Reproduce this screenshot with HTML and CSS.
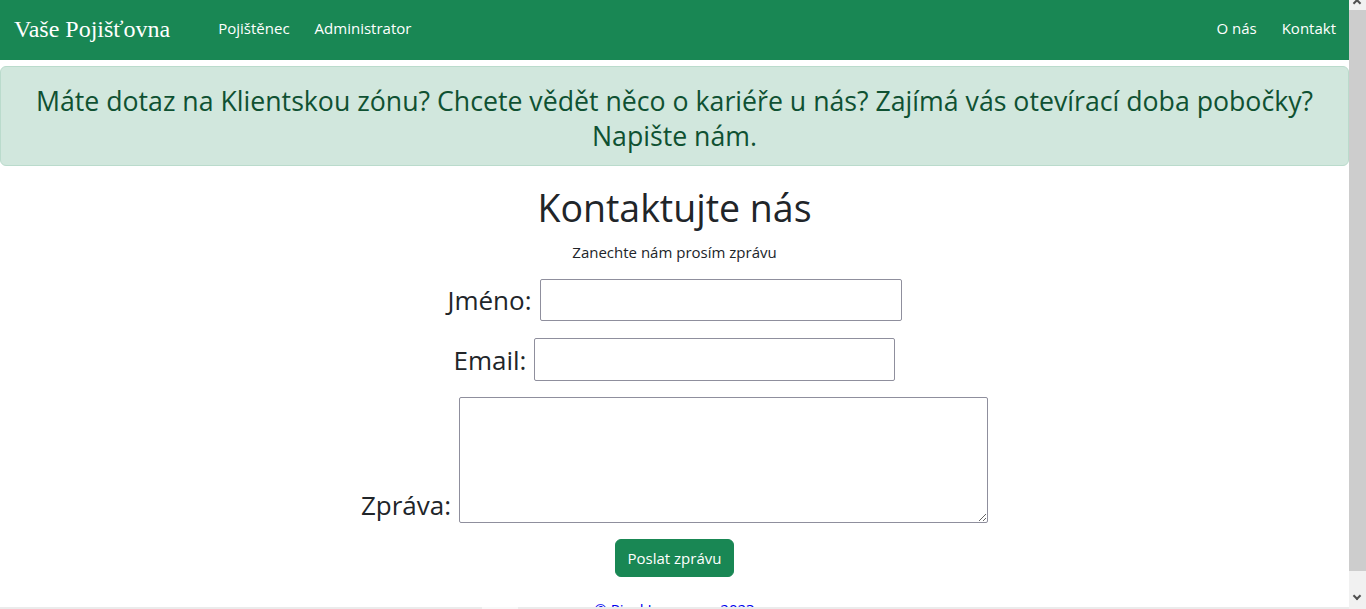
FILE: index.html
```html
<!DOCTYPE html>
<html lang="cs">
<head>
<meta charset="utf-8">
<title>Kontakt - Vaše Pojišťovna</title>
<link rel="stylesheet" href="styles.css">
</head>
<body>
<div class="page">
  <nav class="navbar">
    <a class="brand" href="#">Vaše Pojišťovna</a>
    <ul class="nav-left">
      <li><a href="#">Pojištěnec</a></li>
      <li><a href="#">Administrator</a></li>
    </ul>
    <ul class="nav-right">
      <li><a href="#">O nás</a></li>
      <li><a href="#">Kontakt</a></li>
    </ul>
  </nav>

  <div class="alert">
    <p>Máte dotaz na Klientskou zónu? Chcete vědět něco o kariéře u nás? Zajímá vás otevírací doba pobočky? Napište nám.</p>
  </div>

  <main class="contact">
    <h1 class="title">Kontaktujte nás</h1>
    <p class="subtitle">Zanechte nám prosím zprávu</p>
    <form class="form">
      <div class="row">
        <label class="label" for="jmeno">Jméno:</label>
        <input class="field field-name" id="jmeno" type="text">
      </div>
      <div class="row">
        <label class="label" for="email">Email:</label>
        <input class="field field-email" id="email" type="email">
      </div>
      <div class="row row-end">
        <label class="label label-msg" for="zprava">Zpráva:</label>
        <textarea class="field field-msg" id="zprava"></textarea>
      </div>
      <button class="btn" type="button">Poslat zprávu</button>
    </form>
    <footer class="footer"><a href="#">© Pixel Insurance 2023</a></footer>
  </main>
</div>

<div class="vscroll">
  <div class="vs-top"><span class="caret up"></span></div>
  <div class="vs-thumb"></div>
  <div class="vs-bottom"><span class="caret down"></span></div>
</div>
<div class="hscroll"><div class="hs-thumb"></div></div>
</body>
</html>
```

FILE: styles.css
```css
* { box-sizing: border-box; }

html, body {
  margin: 0;
  padding: 0;
  height: 100%;
  overflow: hidden;
  background: #fff;
}

body {
  font-family: "Open Sans", "Noto Sans", sans-serif;
  color: #212529;
}

.page {
  width: calc(100% - 17px);
  height: 100%;
  overflow: hidden;
}

/* Navbar */
.navbar {
  height: 60px;
  background: #198754;
  display: flex;
  align-items: center;
  padding: 0 13px 0 14px;
}

.brand {
  font-family: "Liberation Serif", "Times New Roman", serif;
  font-size: 24px;
  color: #fff;
  text-decoration: none;
  margin-right: 48px;
  margin-top: -2px;
}

.nav-left, .nav-right {
  list-style: none;
  margin: 0;
  padding: 0;
  display: flex;
  gap: 25px;
}

.nav-left li, .nav-right li {
  margin-top: -4px;
}

.nav-right { margin-left: auto; }

.navbar li a {
  color: #fff;
  text-decoration: none;
  font-size: 15px;
}

/* Alert */
.alert {
  margin-top: 6px;
  height: 100px;
  background: #d1e7dd;
  border: 1px solid #badbcc;
  border-radius: 6px;
  padding: 16px 16px 0;
}

.alert p {
  margin: 0;
  text-align: center;
  color: #0f5132;
  font-size: 26.7px;
  line-height: 35px;
}

/* Contact */
.contact {
  display: flex;
  flex-direction: column;
  align-items: center;
}

.title {
  margin: 18px 0 0;
  font-size: 37.5px;
  font-weight: 400;
  line-height: 48px;
}

.subtitle {
  margin: 10px 0 0;
  font-size: 15px;
  line-height: 20px;
}

.form {
  display: flex;
  flex-direction: column;
  align-items: center;
  margin-top: 17px;
}

.row {
  display: flex;
  align-items: center;
  gap: 8px;
  margin-bottom: 17px;
}

.row-end {
  align-items: flex-end;
  margin-top: -1px;
  margin-bottom: 16px;
}

.label {
  font-size: 26px;
  line-height: 34px;
}

.label-msg {
  line-height: 36px;
}

.field {
  border: 1px solid #8f8f9d;
  border-radius: 2px;
  background: #fff;
  font: inherit;
  margin: 0;
}

.field-name { width: 362px; height: 42px; }
.field-email { width: 361px; height: 43px; }
.field-msg { width: 529px; height: 126px; display: block; }

.btn {
  background: #198754;
  color: #fff;
  border: 1px solid #198754;
  border-radius: 6px;
  font-family: inherit;
  font-size: 15px;
  padding: 0;
  white-space: nowrap;
  width: 119px;
  height: 38px;
}

.footer {
  margin-top: 22px;
  font-size: 15px;
  line-height: 20px;
}

.footer a {
  color: #0000ee;
  text-decoration: none;
}

/* Fake scrollbars */
.vscroll {
  position: fixed;
  top: 0;
  right: 0;
  width: 17px;
  height: 100%;
  background: #f1f1f1;
  display: flex;
  flex-direction: column;
}

.vs-top {
  height: 10px;
  position: relative;
}

.vs-thumb {
  height: 561px;
  background: #cdcdcd;
}

.vs-bottom {
  flex: 1;
  position: relative;
}

.caret {
  position: absolute;
  left: 5px;
  width: 6px;
  height: 6px;
  border-left: 2px solid #505050;
  border-top: 2px solid #505050;
}

.caret.up { top: 0; transform: rotate(45deg); }
.caret.down { top: 22px; transform: rotate(225deg); }

.hscroll {
  position: fixed;
  left: 0;
  bottom: 0;
  width: calc(100% - 17px);
  height: 2px;
  background: #ebebeb;
}

.hs-thumb {
  margin-left: 482px;
  width: 36px;
  height: 2px;
  background: #f8f8f8;
}
```
